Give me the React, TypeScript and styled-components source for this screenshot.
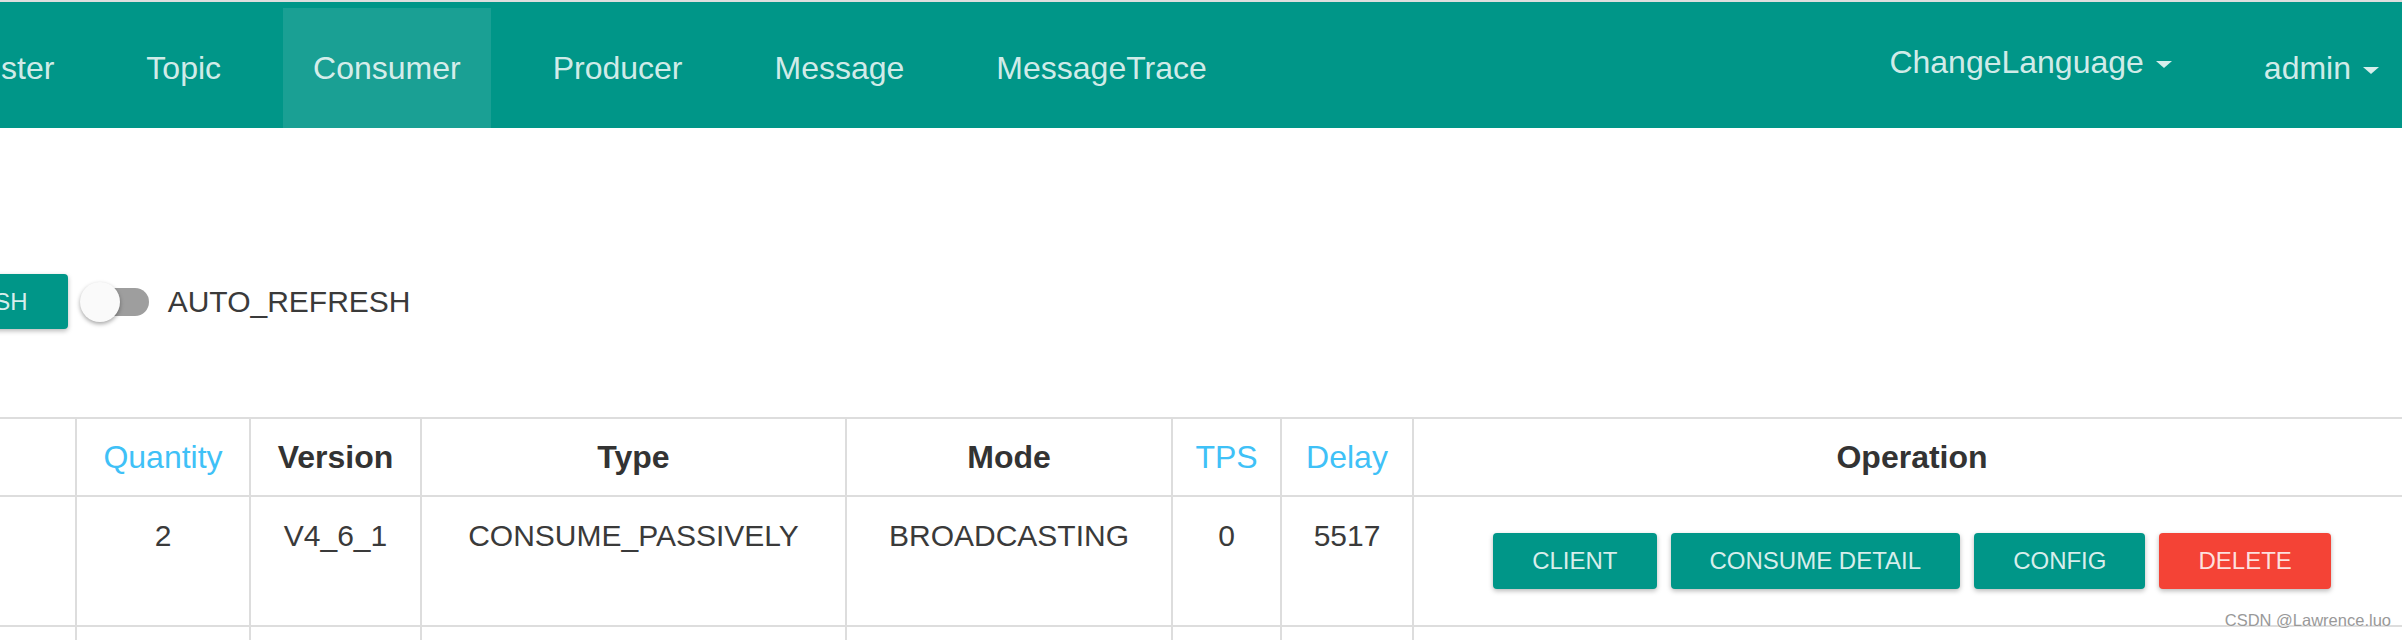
import React from 'react';
import styled, { createGlobalStyle } from 'styled-components';

const GlobalStyle = createGlobalStyle`
  html, body {
    margin: 0;
    padding: 0;
    background: #fff;
  }
  body {
    font-family: 'Liberation Sans', Arial, Helvetica, sans-serif;
    overflow: hidden;
  }
  * {
    box-sizing: border-box;
  }
`;

type Column = { title: string; width: number; sortable?: boolean };

const columns: Column[] = [
  { title: '', width: 77 },
  { title: 'Quantity', width: 174, sortable: true },
  { title: 'Version', width: 171 },
  { title: 'Type', width: 425 },
  { title: 'Mode', width: 326 },
  { title: 'TPS', width: 109, sortable: true },
  { title: 'Delay', width: 132, sortable: true },
  { title: 'Operation', width: 998 },
];

const row = ['', '2', 'V4_6_1', 'CONSUME_PASSIVELY', 'BROADCASTING', '0', '5517'];

const menu = ['Cluster', 'Topic', 'Consumer', 'Producer', 'Message', 'MessageTrace'];

const App = () => {
  return (
    <Page>
      <GlobalStyle />
      <NavBar>
        <NavList>
          {menu.map(item => (
            <NavItem key={item} $active={item === 'Consumer'}>
              {item}
            </NavItem>
          ))}
        </NavList>
        <NavRight>
          <NavItem $lift>
            <NavLabel>
              ChangeLanguage
              <Caret />
            </NavLabel>
          </NavItem>
          <NavItem>
            <NavLabel>
              admin
              <Caret />
            </NavLabel>
          </NavItem>
        </NavRight>
      </NavBar>

      <Toolbar>
        <RefreshButton>REFRESH</RefreshButton>
        <Switch>
          <SwitchTrack />
          <SwitchKnob />
        </Switch>
        <SwitchLabel>AUTO_REFRESH</SwitchLabel>
      </Toolbar>

      <Table>
        <colgroup>
          {columns.map((c, i) => (
            <Col key={i} $w={c.width} />
          ))}
        </colgroup>
        <thead>
          <tr>
            {columns.map((c, i) => (
              <Th key={i}>
                {c.sortable ? <SortLink>{c.title}</SortLink> : c.title}
              </Th>
            ))}
          </tr>
        </thead>
        <tbody>
          <tr>
            {row.map((v, i) => (
              <Td key={i}>{v}</Td>
            ))}
            <Td>
              <ButtonGroup>
                <Button>CLIENT</Button>
                <Button>CONSUME DETAIL</Button>
                <Button>CONFIG</Button>
                <Button $danger>DELETE</Button>
              </ButtonGroup>
            </Td>
          </tr>
          <tr>
            {columns.map((c, i) => (
              <EmptyTd key={i} />
            ))}
          </tr>
        </tbody>
      </Table>

      <Watermark>CSDN @Lawrence.luo</Watermark>
    </Page>
  );
};

const Page = styled.div`
  position: relative;
  width: 2402px;
  height: 640px;
  overflow: hidden;
  background: #fff;
`;

const NavBar = styled.nav`
  display: flex;
  height: 128px;
  padding-top: 6px;
  background: #009688;
  border-top: 2px solid #dedede;
`;

const NavList = styled.div`
  display: flex;
  margin-left: -93px;
`;

const NavRight = styled.div`
  display: flex;
  margin-left: auto;
  margin-right: -23px;
`;

const NavItem = styled.a<{ $active?: boolean; $lift?: boolean }>`
  display: flex;
  align-items: center;
  height: 120px;
  padding: 0 30px ${p => (p.$lift ? '12px' : '0')};
  margin: 0 16px;
  font-size: 32px;
  white-space: nowrap;
  color: rgba(255, 255, 255, 0.84);
  background: ${p => (p.$active ? 'rgba(255, 255, 255, 0.1)' : 'transparent')};
  cursor: pointer;
`;

const NavLabel = styled.span`
  display: block;
`;

const Caret = styled.span`
  display: inline-block;
  width: 0;
  height: 0;
  margin-left: 12px;
  vertical-align: middle;
  border-top: 7px solid currentColor;
  border-left: 8px solid transparent;
  border-right: 8px solid transparent;
`;

const Toolbar = styled.div`
  display: flex;
  align-items: center;
  height: 55px;
  margin-top: 146px;
`;

const Button = styled.button<{ $danger?: boolean }>`
  height: 56px;
  padding: 0 39px;
  border: none;
  border-radius: 4px;
  font-family: inherit;
  font-size: 24px;
  white-space: nowrap;
  color: rgba(255, 255, 255, 0.85);
  background: ${p => (p.$danger ? '#f44336' : '#009688')};
  box-shadow: 0 2px 5px rgba(0, 0, 0, 0.28);
  cursor: pointer;
`;

const RefreshButton = styled(Button)`
  height: 55px;
  padding: 0 40px;
  margin-left: -127px;
`;

const Switch = styled.div`
  position: relative;
  display: flex;
  align-items: center;
  width: 70px;
  height: 40px;
  margin-left: 12px;
`;

const SwitchTrack = styled.div`
  width: 68px;
  height: 28px;
  margin-left: 1px;
  border-radius: 14px;
  background: #9e9e9e;
`;

const SwitchKnob = styled.div`
  position: absolute;
  left: 0;
  top: 0;
  width: 40px;
  height: 40px;
  border-radius: 50%;
  background: #fafafa;
  box-shadow: 0 2px 4px rgba(0, 0, 0, 0.35);
`;

const SwitchLabel = styled.span`
  margin-left: 18px;
  font-size: 30px;
  color: #3a3a3a;
`;

const Table = styled.table`
  width: 2412px;
  margin-top: 88px;
  table-layout: fixed;
  border-collapse: separate;
  border-spacing: 0;
  border-top: 2px solid #ddd;
`;

const Col = styled.col<{ $w: number }>`
  width: ${p => p.$w}px;
`;

const Th = styled.th`
  height: 78px;
  padding: 0 16px;
  vertical-align: middle;
  text-align: center;
  font-size: 32px;
  font-weight: bold;
  color: #333;
  border-right: 2px solid #ddd;
  border-bottom: 2px solid #ddd;
`;

const SortLink = styled.a`
  font-weight: normal;
  color: #3fc1f7;
  cursor: pointer;
`;

const Td = styled.td`
  padding: 18px 16px;
  vertical-align: top;
  text-align: center;
  font-size: 30px;
  line-height: 42px;
  color: #3a3a3a;
  border-right: 2px solid #ddd;
  border-bottom: 2px solid #ddd;
`;

const EmptyTd = styled(Td)`
  height: 60px;
`;

const ButtonGroup = styled.div`
  display: flex;
  justify-content: center;
  gap: 14px;
  margin: 18px 0;
`;

const Watermark = styled.div`
  position: absolute;
  right: 11px;
  top: 611px;
  font-size: 16.5px;
  color: #999;
  text-shadow: 0 0 2px #fff;
`;

export default App;
